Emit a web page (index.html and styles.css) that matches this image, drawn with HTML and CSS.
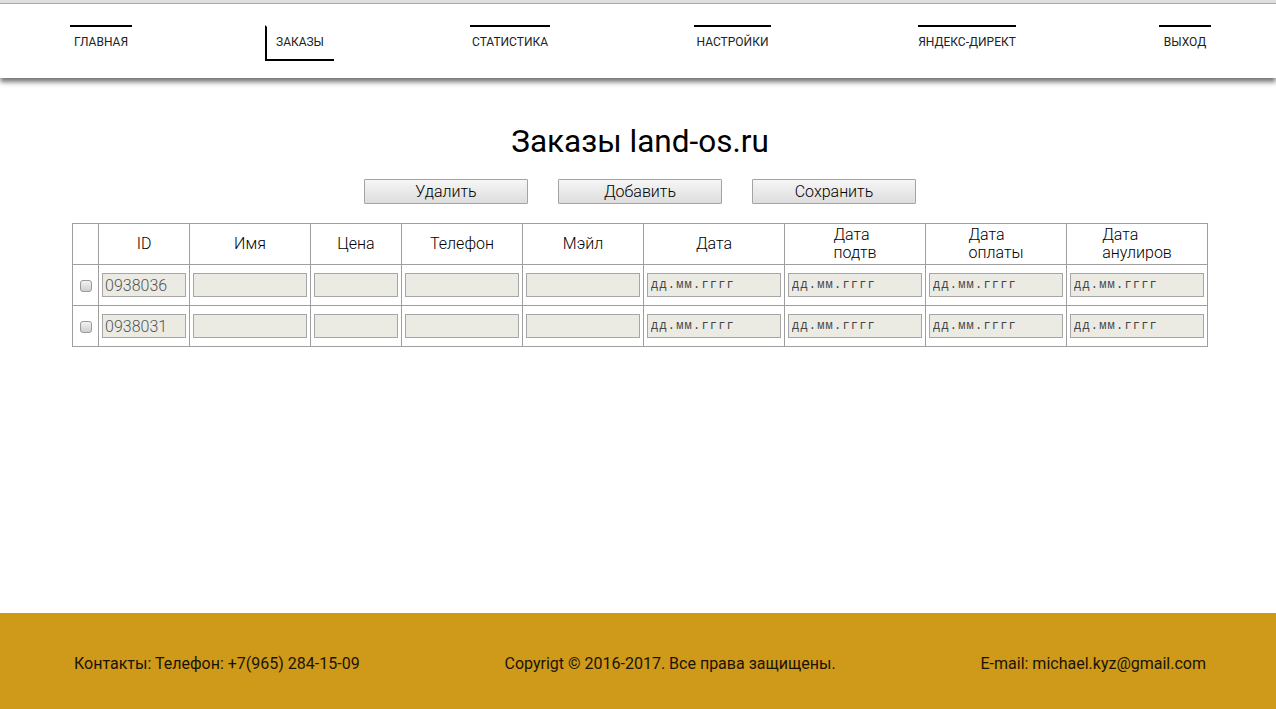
FILE: index.html
```html
<!DOCTYPE html>
<html lang="ru">
<head>
<meta charset="utf-8">
<title>Заказы land-os.ru</title>
<link rel="stylesheet" href="styles.css">
</head>
<body>
<div class="page">
  <header class="header">
    <nav class="nav">
      <a class="nav-item nav-main" href="#">Главная</a>
      <a class="nav-item nav-orders active" href="#">Заказы</a>
      <a class="nav-item nav-stats" href="#">Статистика</a>
      <a class="nav-item nav-settings" href="#">Настройки</a>
      <a class="nav-item nav-direct" href="#">Яндекс-Директ</a>
      <a class="nav-item nav-exit" href="#">Выход</a>
    </nav>
  </header>

  <main class="main">
    <h1 class="title">Заказы land-os.ru</h1>
    <div class="actions">
      <button class="btn" type="button">Удалить</button>
      <button class="btn" type="button">Добавить</button>
      <button class="btn" type="button">Сохранить</button>
    </div>

    <table class="orders">
      <colgroup>
        <col class="c-check"><col class="c-id"><col class="c-name"><col class="c-price"><col class="c-phone"><col class="c-mail"><col class="c-date"><col class="c-date"><col class="c-date"><col class="c-date">
      </colgroup>
      <thead>
        <tr>
          <th></th>
          <th>ID</th>
          <th>Имя</th>
          <th>Цена</th>
          <th>Телефон</th>
          <th>Мэйл</th>
          <th>Дата</th>
          <th><span class="th-wrap">Дата<br>подтв</span></th>
          <th><span class="th-wrap">Дата<br>оплаты</span></th>
          <th><span class="th-wrap">Дата<br>анулиров</span></th>
        </tr>
      </thead>
      <tbody>
        <tr>
          <td class="td-check"><input class="check" type="checkbox"></td>
          <td><input class="field" type="text" value="0938036"></td>
          <td><input class="field" type="text"></td>
          <td><input class="field" type="text"></td>
          <td><input class="field" type="text"></td>
          <td><input class="field" type="text"></td>
          <td><input class="field date" type="text" placeholder="дд.мм.гггг"></td>
          <td><input class="field date" type="text" placeholder="дд.мм.гггг"></td>
          <td><input class="field date" type="text" placeholder="дд.мм.гггг"></td>
          <td><input class="field date" type="text" placeholder="дд.мм.гггг"></td>
        </tr>
        <tr>
          <td class="td-check"><input class="check" type="checkbox"></td>
          <td><input class="field" type="text" value="0938031"></td>
          <td><input class="field" type="text"></td>
          <td><input class="field" type="text"></td>
          <td><input class="field" type="text"></td>
          <td><input class="field" type="text"></td>
          <td><input class="field date" type="text" placeholder="дд.мм.гггг"></td>
          <td><input class="field date" type="text" placeholder="дд.мм.гггг"></td>
          <td><input class="field date" type="text" placeholder="дд.мм.гггг"></td>
          <td><input class="field date" type="text" placeholder="дд.мм.гггг"></td>
        </tr>
      </tbody>
    </table>
  </main>

  <footer class="footer">
    <span>Контакты: Телефон: +7(965) 284-15-09</span>
    <span>Copyrigt © 2016-2017. Все права защищены.</span>
    <span>E-mail: michael.kyz@gmail.com</span>
  </footer>
</div>
</body>
</html>
```

FILE: styles.css
```css
* { box-sizing: border-box; }

html, body {
  margin: 0;
  padding: 0;
  height: 100%;
}

body {
  font-family: Roboto, "Noto Sans", "Liberation Sans", sans-serif;
  color: #000;
  background: #fff;
}

.page {
  min-height: 100vh;
  display: flex;
  flex-direction: column;
}

/* Header */
.header {
  height: 78px;
  background: #fff;
  border-top: 3px solid #dedede;
  box-shadow: inset 0 1px 0 #a8a8a8, 0 4px 5px rgba(0, 0, 0, 0.55);
  padding: 22px 65px 0 70px;
  position: relative;
  z-index: 1;
}

.nav {
  display: flex;
  align-items: flex-start;
}

.nav-item {
  display: block;
  height: 36px;
  border-top: 2px solid #000;
  padding-top: 8px;
  font-size: 12px;
  line-height: 14px;
  text-transform: uppercase;
  text-align: center;
  color: #222;
  text-decoration: none;
  white-space: nowrap;
}

.nav-main { width: 62px; margin-right: 133px; }
.nav-orders { margin-right: 136px; }
.nav-stats { width: 80px; margin-right: 144px; }
.nav-settings { width: 77px; margin-right: 147px; }
.nav-direct { width: 98px; margin-right: 143px; }
.nav-exit { width: 52px; }

.nav-item.active {
  border-top-color: transparent;
  border-left: 2px solid #000;
  border-bottom: 2px solid #000;
  width: 69px;
  padding-left: 9px;
  padding-right: 8px;
  text-align: left;
}

/* Main */
.main {
  padding: 0 68px 0 72px;
}

.title {
  margin: 44px 0 0;
  text-align: center;
  font-size: 31.5px;
  line-height: 40px;
  font-weight: 400;
  color: #000;
}

.actions {
  display: flex;
  justify-content: center;
  gap: 30px;
  margin-top: 17px;
}

.btn {
  width: 164px;
  height: 25px;
  padding: 0;
  border: 1px solid #a3a3a3;
  border-radius: 1px;
  background: linear-gradient(#f6f6f6, #dddddd);
  font-family: Roboto, "Noto Sans", sans-serif;
  font-size: 16px;
  font-weight: 300;
  color: #000;
  cursor: pointer;
}

/* Table */
.orders {
  margin-top: 19px;
  width: 1136px;
  border-collapse: collapse;
  table-layout: fixed;
}

.c-check { width: 26px; }
.c-id { width: 91px; }
.c-name { width: 121px; }
.c-price { width: 91px; }
.c-phone { width: 121px; }
.c-mail { width: 121px; }
.c-date { width: 141px; }

.orders th,
.orders td {
  border: 1px solid #9f9f9f;
}

.orders th {
  height: 41px;
  padding: 0 2px;
  font-size: 16px;
  font-weight: 300;
  line-height: 18px;
  text-align: center;
  color: #000;
}

.th-wrap {
  display: inline-block;
  text-align: left;
}

.orders td {
  height: 41px;
  padding: 0 3px;
  vertical-align: middle;
}

.td-check {
  text-align: center;
}

.check {
  appearance: none;
  -webkit-appearance: none;
  width: 12px;
  height: 12px;
  margin: 4px 0 0 0;
  border: 1px solid #9a9a9a;
  border-radius: 3px;
  background: linear-gradient(#f2f2f2, #cfcfcf);
  vertical-align: top;
}

.field {
  display: block;
  width: 100%;
  height: 24px;
  margin: 0;
  padding: 0 2px;
  border: 1px solid #a6a6a6;
  border-radius: 0;
  background: #ebebe4;
  font-family: Roboto, "Noto Sans", sans-serif;
  font-size: 16px;
  font-weight: 300;
  color: #555;
  outline: none;
}

.field.date {
  font-family: "Liberation Mono", "DejaVu Sans Mono", monospace;
  font-size: 12px;
  padding-left: 3px;
}

.field.date::placeholder {
  color: #444;
  letter-spacing: 1.2px;
}

/* Footer */
.footer {
  margin-top: auto;
  height: 96px;
  background: #cf991a;
  display: flex;
  justify-content: space-between;
  align-items: center;
  padding: 4px 70px 0 74px;
  font-size: 16px;
  color: #1a1406;
}
```
